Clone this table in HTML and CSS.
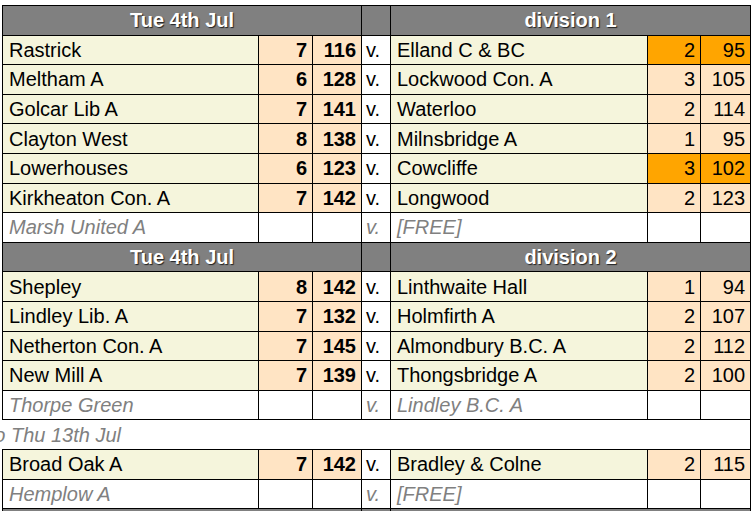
FILE: index.html
```html
<!DOCTYPE html>
<html>
<head>
<meta charset="utf-8">
<link rel="stylesheet" href="styles.css">
</head>
<body>
<table class="results">
  <colgroup>
    <col class="c-name"><col class="c-score"><col class="c-total"><col class="c-v"><col class="c-name2"><col class="c-score2"><col class="c-total2">
  </colgroup>
  <tbody>
    <tr class="head"><td colspan="3">Tue 4th Jul</td><td></td><td colspan="3">division 1</td></tr>
    <tr><td class="name">Rastrick</td><td class="sc win">7</td><td class="sc win">116</td><td class="v">v.</td><td class="name">Elland C &amp; BC</td><td class="sc hi">2</td><td class="sc hi">95</td></tr>
    <tr><td class="name">Meltham A</td><td class="sc win">6</td><td class="sc win">128</td><td class="v">v.</td><td class="name">Lockwood Con. A</td><td class="sc">3</td><td class="sc">105</td></tr>
    <tr><td class="name">Golcar Lib A</td><td class="sc win">7</td><td class="sc win">141</td><td class="v">v.</td><td class="name">Waterloo</td><td class="sc">2</td><td class="sc">114</td></tr>
    <tr><td class="name">Clayton West</td><td class="sc win">8</td><td class="sc win">138</td><td class="v">v.</td><td class="name">Milnsbridge A</td><td class="sc">1</td><td class="sc">95</td></tr>
    <tr><td class="name">Lowerhouses</td><td class="sc win">6</td><td class="sc win">123</td><td class="v">v.</td><td class="name">Cowcliffe</td><td class="sc hi">3</td><td class="sc hi">102</td></tr>
    <tr><td class="name">Kirkheaton Con. A</td><td class="sc win">7</td><td class="sc win">142</td><td class="v">v.</td><td class="name">Longwood</td><td class="sc">2</td><td class="sc">123</td></tr>
    <tr class="free"><td class="name">Marsh United A</td><td></td><td></td><td class="v">v.</td><td class="name">[FREE]</td><td></td><td></td></tr>
    <tr class="head"><td colspan="3">Tue 4th Jul</td><td></td><td colspan="3">division 2</td></tr>
    <tr><td class="name">Shepley</td><td class="sc win">8</td><td class="sc win">142</td><td class="v">v.</td><td class="name">Linthwaite Hall</td><td class="sc">1</td><td class="sc">94</td></tr>
    <tr><td class="name">Lindley Lib. A</td><td class="sc win">7</td><td class="sc win">132</td><td class="v">v.</td><td class="name">Holmfirth A</td><td class="sc">2</td><td class="sc">107</td></tr>
    <tr><td class="name">Netherton Con. A</td><td class="sc win">7</td><td class="sc win">145</td><td class="v">v.</td><td class="name">Almondbury B.C. A</td><td class="sc">2</td><td class="sc">112</td></tr>
    <tr><td class="name">New Mill A</td><td class="sc win">7</td><td class="sc win">139</td><td class="v">v.</td><td class="name">Thongsbridge A</td><td class="sc">2</td><td class="sc">100</td></tr>
    <tr class="free"><td class="name">Thorpe Green</td><td></td><td></td><td class="v">v.</td><td class="name">Lindley B.C. A</td><td></td><td></td></tr>
    <tr class="note"><td colspan="7"><span class="note-text">Postponed to Thu 13th Jul</span></td></tr>
    <tr><td class="name">Broad Oak A</td><td class="sc win">7</td><td class="sc win">142</td><td class="v">v.</td><td class="name">Bradley &amp; Colne</td><td class="sc">2</td><td class="sc">115</td></tr>
    <tr class="free"><td class="name">Hemplow A</td><td></td><td></td><td class="v">v.</td><td class="name">[FREE]</td><td></td><td></td></tr>
    <tr class="head"><td colspan="3"></td><td></td><td colspan="3"></td></tr>
  </tbody>
</table>
</body>
</html>
```

FILE: styles.css
```css
html, body {
  margin: 0;
  padding: 0;
  background: #fff;
  overflow: hidden;
}

body {
  font-family: "Liberation Sans", Arial, sans-serif;
  font-size: 20px;
  color: #000;
}

.results {
  border-collapse: collapse;
  table-layout: fixed;
  width: 749px;
  margin: 5px 0 0 2px;
}

.c-name { width: 256px; }
.c-score { width: 54px; }
.c-total { width: 49px; }
.c-v { width: 29px; }
.c-name2 { width: 257px; }
.c-score2 { width: 53px; }
.c-total2 { width: 50px; }

.results td {
  border: 1px solid #000;
  height: 29.6px;
  box-sizing: border-box;
  padding: 0 6px;
  vertical-align: middle;
  white-space: nowrap;
  overflow: hidden;
  line-height: 22px;
}

.results td.name {
  background: #f5f5dc;
}

.results td.sc {
  background: #ffe4c4;
  text-align: right;
  padding-right: 5px;
}

.results td.sc.win {
  font-weight: bold;
}

.results td.sc.hi {
  background: #ffa500;
}

.results td.v {
  background: #fff;
  padding-left: 4px;
}

.head td {
  background: #808080;
  color: #fff;
  font-weight: bold;
  text-align: center;
  text-shadow: 1px 1px 1px #222;
}

.free td,
.free td.name,
.free td.v {
  background: #fff;
  color: #808080;
  font-style: italic;
}

.note td {
  border-left: none;
  color: #808080;
  font-style: italic;
  background: #fff;
  overflow: visible;
  padding: 0;
}

.note-text {
  display: block;
  text-indent: -115px;
}
```
